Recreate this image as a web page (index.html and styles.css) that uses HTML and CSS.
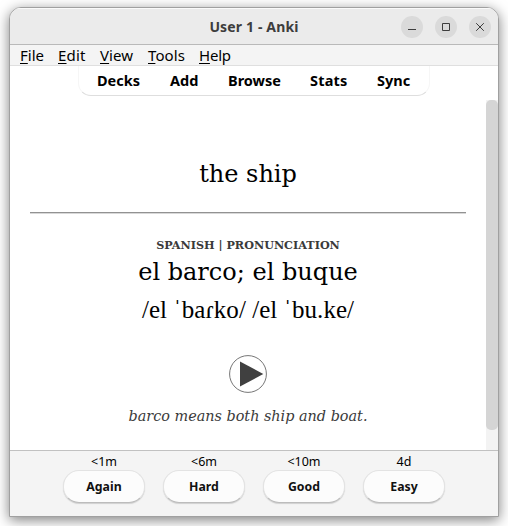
FILE: index.html
```html
<!DOCTYPE html>
<html lang="en">
<head>
<meta charset="utf-8">
<title>User 1 - Anki</title>
<link rel="stylesheet" href="styles.css">
</head>
<body>
<div class="window">
  <header class="titlebar">
    <h1 class="title">User 1 - Anki</h1>
    <div class="controls">
      <svg viewBox="0 0 22 22"><path d="M7 13.5h8"/></svg>
      <svg viewBox="0 0 22 22"><path d="M7.5 7.5h7v7h-7z"/></svg>
      <svg viewBox="0 0 22 22"><path d="M7.2 7.2l7.6 7.6M14.8 7.2l-7.6 7.6"/></svg>
    </div>
  </header>
  <nav class="menubar">
    <span class="m-file"><u>F</u>ile</span><span class="m-edit"><u>E</u>dit</span><span class="m-view"><u>V</u>iew</span><span class="m-tools"><u>T</u>ools</span><span class="m-help"><u>H</u>elp</span>
  </nav>
  <div class="toolbar">
    <nav class="tabs">
      <span class="t-decks">Decks</span><span class="t-add">Add</span><span class="t-browse">Browse</span><span class="t-stats">Stats</span><span class="t-sync">Sync</span>
    </nav>
  </div>
  <div class="review">
    <main class="card">
      <div class="front">the ship</div>
      <hr>
      <div class="label">SPANISH | PRONUNCIATION</div>
      <div class="back">el barco; el buque</div>
      <div class="ipa">/el ˈbaɾko/ /el ˈbu.ke/</div>
      <svg class="play" viewBox="0 0 40 40"><circle cx="20" cy="20" r="18.4"/><path d="M12 7.5v25L35.3 20z"/></svg>
      <div class="note">barco means both ship and boat.</div>
    </main>
    <div class="scroll"><div class="thumb"></div></div>
  </div>
  <footer class="answers">
    <div class="answer"><span class="time">&lt;1m</span><button>Again</button></div>
    <div class="answer"><span class="time">&lt;6m</span><button>Hard</button></div>
    <div class="answer"><span class="time">&lt;10m</span><button>Good</button></div>
    <div class="answer"><span class="time">4d</span><button>Easy</button></div>
  </footer>
</div>
</body>
</html>
```
FILE: styles.css
```css
* { box-sizing: border-box; }
body {
  margin: 0;
  width: 508px;
  height: 526px;
  overflow: hidden;
  padding: 7px 9px 9px;
  background: #fff;
  font-family: "Noto Sans", sans-serif;
  color: #000;
}
.window {
  width: 490px;
  height: 510px;
  border: 1px solid #a0a0a0;
  border-radius: 12px 12px 0 0;
  background: #fff;
  box-shadow: 0 3px 13px rgba(0, 0, 0, .5);
  overflow: hidden;
  display: flex;
  flex-direction: column;
}
.titlebar {
  height: 37px;
  flex: none;
  background: #ebebeb;
  border-top: 1px solid #fafafa;
  border-bottom: 1px solid #b9b9b9;
  display: grid;
  grid-template-columns: 1fr auto 1fr;
  align-items: center;
}
.title {
  grid-column: 2;
  margin: 0;
  font-size: 14px;
  font-weight: 700;
  color: #3d3d3d;
  letter-spacing: .15px;
}
.controls {
  display: flex;
  gap: 12px;
  justify-content: flex-end;
  padding-right: 7px;
}
.controls svg {
  width: 22px;
  height: 22px;
  border-radius: 50%;
  background: #dadada;
  fill: none;
  stroke: #3d3d3d;
}
.menubar {
  height: 21px;
  flex: none;
  background: #f4f4f4;
  border-bottom: 1px solid #dfdfdf;
  display: flex;
  padding-left: 10px;
  font-size: 15px;
  line-height: 20px;
  white-space: nowrap;
}
.menubar u { text-underline-offset: 2px; text-decoration-thickness: 1px; }
.m-file { width: 38px; }
.m-edit { width: 42px; letter-spacing: .15px; }
.m-view { width: 48px; letter-spacing: .1px; }
.m-tools { width: 51px; letter-spacing: .1px; }
.m-help { letter-spacing: -.2px; }
.toolbar { height: 34px; flex: none; display: flex; padding-left: 68px; }
.tabs {
  width: 352px;
  height: 30px;
  border: 1px solid #f6f6f6;
  border-top: 0;
  border-bottom: 1px solid #dedede;
  border-radius: 0 0 13px 13px;
  display: flex;
  padding-left: 18px;
  font-size: 14.5px;
  font-weight: 700;
  line-height: 29px;
  white-space: nowrap;
}
.t-decks { width: 73px; }
.t-add { width: 58px; }
.t-browse { width: 82px; }
.t-stats { width: 67px; letter-spacing: .2px; }
.review { flex: 1; min-height: 0; display: flex; }
.card {
  width: 476px;
  padding: 58px 20px 0;
  display: flex;
  flex-direction: column;
  align-items: center;
  font-family: "DejaVu Serif", serif;
  white-space: nowrap;
}
.front, .back { font-size: 24px; line-height: 32px; }
hr {
  width: 436px;
  height: 2px;
  flex: none;
  margin: 22px 0 24px;
  border: 0;
  border-top: 1px solid #929292;
  border-bottom: 1px solid #d8d8d8;
}
.label { font-size: 11.2px; font-weight: 700; line-height: 14px; color: #3a3a3a; margin-bottom: 8px; }
.back { line-height: 24px; }
.ipa {
  font-family: "Liberation Serif", serif;
  font-size: 25px;
  line-height: 32px;
  margin-top: 10px;
  letter-spacing: .05px;
}
.play { width: 40px; height: 40px; flex: none; margin: 28px 0 12px; }
.play circle { fill: #fff; stroke: #666; stroke-width: .9; }
.play path { fill: #404040; }
.note { font-size: 14.4px; line-height: 20px; font-style: italic; color: #3a3a3a; }
.scroll { width: 12px; background: #f3f3f3; }
.thumb { height: 330px; background: #d5d5d5; border-radius: 5px; }
.answers {
  height: 66px;
  flex: none;
  background: #f4f4f4;
  border-top: 1px solid #c1c1c1;
  display: flex;
  gap: 18px;
  padding: 2px 0 0 53px;
}
.answer { width: 82px; display: flex; flex-direction: column; align-items: center; }
.time { font-size: 12.5px; line-height: 17px; }
button {
  width: 82px;
  height: 33px;
  padding: 0;
  border: 1px solid #e3e3e3;
  border-bottom-color: #bcbcbc;
  border-radius: 16px;
  background: #fcfcfc;
  box-shadow: 0 1px 1px #d0d0d0;
  font: 700 12.3px "Noto Sans", sans-serif;
  color: #111;
}
```
